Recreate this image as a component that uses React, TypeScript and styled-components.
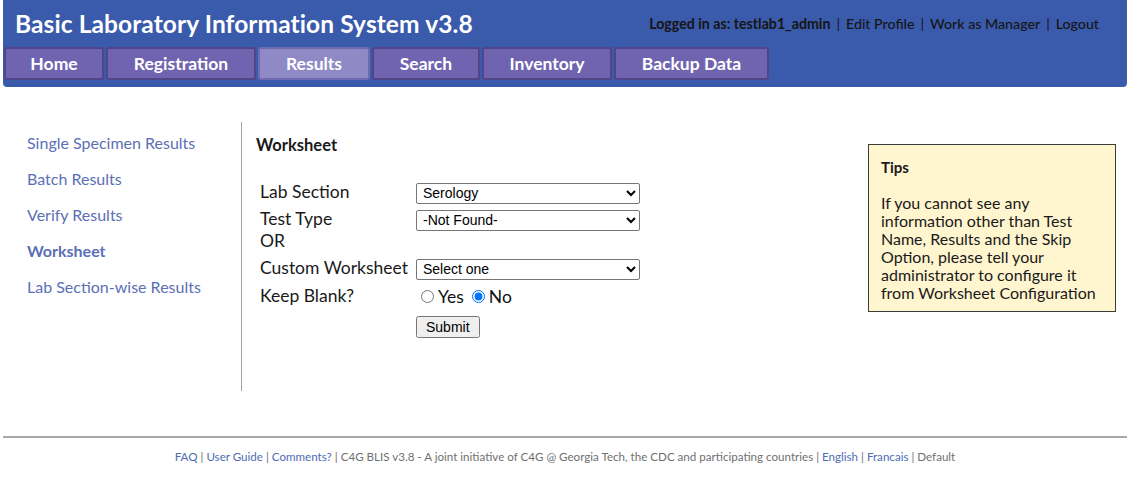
import React from 'react';
import styled, { createGlobalStyle } from 'styled-components';

const GlobalStyle = createGlobalStyle`
  body {
    margin: 0;
    background: #fff;
    font-family: Lato, "Noto Sans", sans-serif;
    color: #111;
  }
`;

const navItems = [
  { label: 'Home', width: 100 },
  { label: 'Registration', width: 150 },
  { label: 'Results', width: 112, active: true },
  { label: 'Search', width: 108 },
  { label: 'Inventory', width: 130 },
  { label: 'Backup Data', width: 155 },
];

const sideLinks = [
  'Single Specimen Results',
  'Batch Results',
  'Verify Results',
  'Worksheet',
  'Lab Section-wise Results',
];

function App() {
  return (
    <Page>
      <GlobalStyle />
      <Header>
        <TopBar>
          <Title>Basic Laboratory Information System v3.8</Title>
          <UserLinks>
            <strong>Logged in as: testlab1_admin</strong>
            <Sep>|</Sep>
            <a>Edit Profile</a>
            <Sep>|</Sep>
            <a>Work as Manager</a>
            <Sep>|</Sep>
            <a>Logout</a>
          </UserLinks>
        </TopBar>
        <Nav>
          {navItems.map((item) => (
            <NavButton key={item.label} $width={item.width} $active={item.active}>
              {item.label}
            </NavButton>
          ))}
        </Nav>
      </Header>

      <Body>
        <Sidebar>
          {sideLinks.map((l) => (
            <SideLink key={l} $current={l === 'Worksheet'}>{l}</SideLink>
          ))}
        </Sidebar>

        <Main>
          <FormColumn>
            <Heading>Worksheet</Heading>
            <FormGrid>
              <Label>Lab Section</Label>
              <Control>
                <Select defaultValue="serology">
                  <option value="serology">Serology</option>
                </Select>
              </Control>

              <Label>Test Type<br />OR</Label>
              <Control>
                <Select defaultValue="nf">
                  <option value="nf">-Not Found-</option>
                </Select>
              </Control>

              <Label>Custom Worksheet</Label>
              <Control>
                <Select defaultValue="one">
                  <option value="one">Select one</option>
                </Select>
              </Control>

              <Label>Keep Blank?</Label>
              <RadioGroup>
                <RadioLabel><Radio type="radio" name="blank" />Yes</RadioLabel>
                <RadioLabel><Radio type="radio" name="blank" defaultChecked />No</RadioLabel>
              </RadioGroup>

              <span />
              <Control>
                <SubmitButton type="button">Submit</SubmitButton>
              </Control>
            </FormGrid>
          </FormColumn>

          <TipsBox>
            <TipsTitle>Tips</TipsTitle>
            <TipsText>
              If you cannot see any information other than Test Name, Results and the Skip
              Option, please tell your administrator to configure it from Worksheet
              Configuration
            </TipsText>
          </TipsBox>
        </Main>
      </Body>

      <Footer>
        <FootLink>FAQ</FootLink> | <FootLink>User Guide</FootLink> | <FootLink>Comments?</FootLink> |{' '}
        C4G BLIS v3.8 - A joint initiative of C4G @ Georgia Tech, the CDC and participating countries |{' '}
        <FootLink>English</FootLink> | <FootLink>Francais</FootLink> | Default
      </Footer>
    </Page>
  );
}

export default App;

const Page = styled.div`
  padding: 0 2px 0 3px;
`;

const Header = styled.div`
  background-color: #3a5aab;
  height: 87px;
  border-radius: 0 0 4px 4px;
  display: flex;
  flex-direction: column;
`;

const TopBar = styled.div`
  height: 47px;
  display: flex;
  align-items: center;
  justify-content: space-between;
  padding: 0 28px 0 12px;
`;

const Title = styled.h1`
  margin: 0;
  color: #fff;
  font-size: 24.5px;
  font-weight: 700;
  letter-spacing: 0.1px;
`;

const UserLinks = styled.div`
  font-size: 14.2px;
  color: #151515;
  display: flex;
  align-items: center;
  gap: 6px;

  strong {
    font-weight: 700;
  }

  a {
    font-weight: 500;
  }
`;

const Sep = styled.span`
  color: #151515;
`;

const Nav = styled.div`
  display: flex;
  gap: 2px;
  padding-left: 1px;
`;

const NavButton = styled.div<{ $width: number; $active?: boolean }>`
  box-sizing: border-box;
  width: ${(p) => p.$width}px;
  height: 33px;
  display: flex;
  align-items: center;
  justify-content: center;
  background-color: ${(p) => (p.$active ? '#8f89c6' : '#7064b0')};
  border: 2px solid ${(p) => (p.$active ? '#6f6bb0' : '#4f4587')};
  border-radius: 3px;
  color: #fff;
  font-size: 17.5px;
  font-weight: 700;
`;

const Body = styled.div`
  display: flex;
  margin-top: 35px;
`;

const Sidebar = styled.div`
  width: 239px;
  height: 269px;
  border-right: 1px solid #a0a0a0;
  box-sizing: border-box;
  padding: 11px 0 0 24px;
  display: flex;
  flex-direction: column;
  gap: 16px;
`;

const SideLink = styled.a<{ $current?: boolean }>`
  font-size: 16px;
  line-height: 20px;
  color: #5b70b5;
  font-weight: ${(p) => (p.$current ? 700 : 400)};
`;

const Main = styled.div`
  flex: 1;
  display: flex;
  justify-content: space-between;
  padding: 0 11px 0 14px;
`;

const FormColumn = styled.div`
  padding-top: 13px;
`;

const Heading = styled.h2`
  margin: 0;
  font-size: 16.5px;
  line-height: 20px;
  font-weight: 700;
  color: #1a1a1a;
`;

const FormGrid = styled.div`
  margin: 26px 0 0 4px;
  display: grid;
  grid-template-columns: 156px 224px;
  grid-template-rows: 27px 49px 28px 30px auto;
`;

const Label = styled.div`
  font-size: 17.5px;
  line-height: 21.5px;
  color: #1a1a1a;
  white-space: nowrap;
`;

const Control = styled.div`
  padding-top: 1px;
`;

const Select = styled.select`
  width: 224px;
  height: 21px;
  font-family: "Liberation Sans", Arial, sans-serif;
  font-size: 14px;
  color: #000;
  border: 1px solid #767676;
  border-radius: 2px;
  background: #fff;
  padding: 0 2px;
`;

const RadioGroup = styled.div`
  display: flex;
  align-items: center;
  gap: 3px;
  height: 22px;
  font-size: 17.5px;
`;

const RadioLabel = styled.label`
  display: flex;
  align-items: center;
`;

const Radio = styled.input`
  margin: 0 4px 0 5px;
  width: 13px;
  height: 13px;
`;

const SubmitButton = styled.button`
  font-family: "Liberation Sans", Arial, sans-serif;
  font-size: 14px;
  height: 22px;
  padding: 0 8px;
  margin: 0;
`;

const TipsBox = styled.div`
  margin-top: 22px;
  width: 248px;
  height: 168px;
  box-sizing: border-box;
  background-color: #fff5cf;
  border: 1px solid #3a3a3a;
  padding: 12px 10px 10px 12px;
  font-size: 16px;
  color: #1a1a1a;
`;

const TipsTitle = styled.div`
  font-weight: 700;
  font-size: 15px;
  line-height: 20px;
  margin-bottom: 17px;
`;

const TipsText = styled.div`
  line-height: 18px;
`;

const Footer = styled.div`
  margin-top: 45px;
  border-top: 2px solid #a8a8a8;
  padding-top: 12px;
  text-align: center;
  font-size: 11.6px;
  color: #707070;
`;

const FootLink = styled.a`
  color: #4e6cb4;
`;
